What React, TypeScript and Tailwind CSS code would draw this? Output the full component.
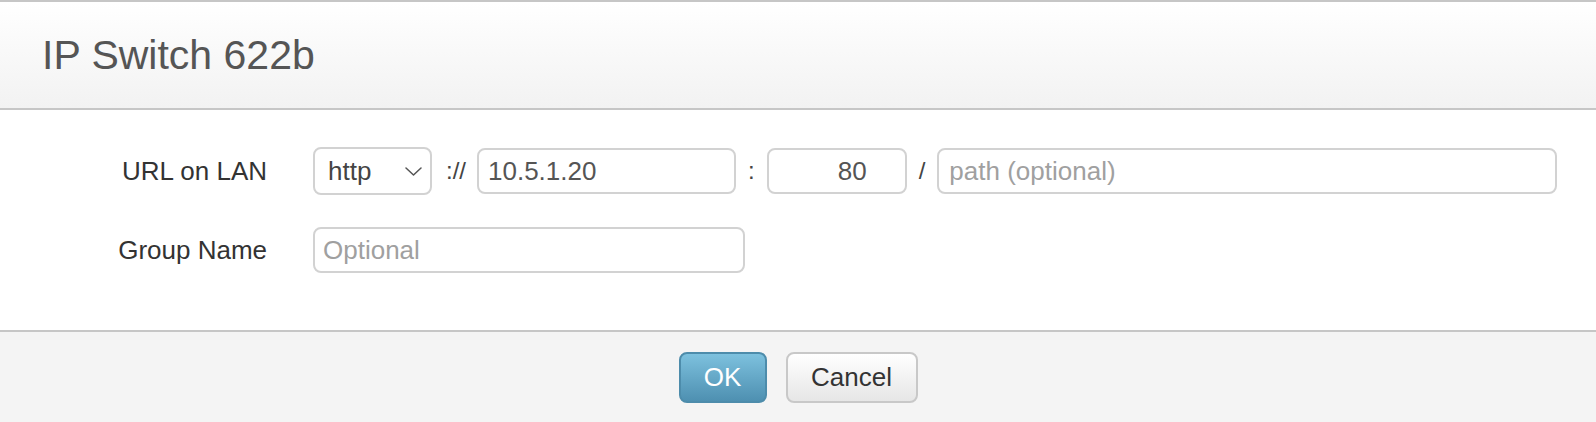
const font = { fontFamily: '"Liberation Sans", Arial, sans-serif' };

function Chevron() {
  return (
    <svg width="17" height="9" viewBox="0 0 17 9" fill="none" className="text-[#555555]">
      <path d="M1 1l7.5 7 7.5-7" stroke="currentColor" strokeWidth="1.5" strokeLinecap="round" strokeLinejoin="round" />
    </svg>
  );
}

export default function App() {
  return (
    <div className="w-[1596px] h-[422px] bg-white flex flex-col" style={font}>
      <div className="h-[2px] bg-[#c6c6c6]" />

      <div className="h-[106px] flex items-center pl-[42px] bg-gradient-to-b from-white to-[#f2f2f2]">
        <h1 className="text-[41px] text-[#555555] leading-none">IP Switch 622b</h1>
      </div>
      <div className="h-[2px] bg-[#c6c6c6]" />

      <div className="h-[220px] flex flex-col pt-[37px]">
        <div className="flex items-center">
          <label className="w-[267px] text-right text-[26px] text-[#333333]">URL on LAN</label>
          <div className="ml-[46px] flex items-center">
            <div className="w-[119px] h-[48px] rounded-[8px] border-2 border-[#d2d2d2] flex items-center justify-between pl-[13px] pr-[8px] text-[26px] text-[#444444]">
              <span>http</span>
              <Chevron />
            </div>
            <span className="ml-[14px] mr-[11px] text-[24px] text-[#444444]">://</span>
            <input
              readOnly
              value="10.5.1.20"
              className="w-[259px] h-[46px] rounded-[8px] border-2 border-[#d2d2d2] pl-[9px] text-[26px] text-[#555555] outline-none"
            />
            <span className="ml-[12px] mr-[12px] text-[24px] text-[#444444]">:</span>
            <input
              readOnly
              value="80"
              className="w-[140px] h-[46px] rounded-[8px] border-2 border-[#d2d2d2] pr-[38px] text-right text-[26px] text-[#555555] outline-none"
            />
            <span className="ml-[12px] mr-[12px] text-[24px] text-[#444444]">/</span>
            <input
              readOnly
              placeholder="path (optional)"
              className="w-[620px] h-[46px] rounded-[8px] border-2 border-[#d2d2d2] pl-[10px] text-[26px] text-[#555555] placeholder:text-[#a0a0a0] outline-none"
            />
          </div>
        </div>

        <div className="flex items-center mt-[32px]">
          <label className="w-[267px] text-right text-[26px] text-[#333333]">Group Name</label>
          <input
            readOnly
            placeholder="Optional"
            className="ml-[46px] w-[432px] h-[46px] rounded-[8px] border-2 border-[#d2d2d2] pl-[8px] text-[26px] text-[#555555] placeholder:text-[#a0a0a0] outline-none"
          />
        </div>
      </div>

      <div className="h-[2px] bg-[#c6c6c6]" />
      <div className="flex-1 bg-[#f4f4f4] flex justify-center items-start pt-[20px] gap-[19px]">
        <button className="w-[88px] h-[51px] rounded-[8px] border-2 border-[#4d8cab] bg-gradient-to-b from-[#7dc1de] to-[#4e90b1] text-white text-[26px]">
          OK
        </button>
        <button className="w-[132px] h-[51px] rounded-[8px] border-2 border-[#c8c8c8] bg-gradient-to-b from-white to-[#e6e6e6] text-[#333333] text-[26px]">
          Cancel
        </button>
      </div>
    </div>
  );
}
